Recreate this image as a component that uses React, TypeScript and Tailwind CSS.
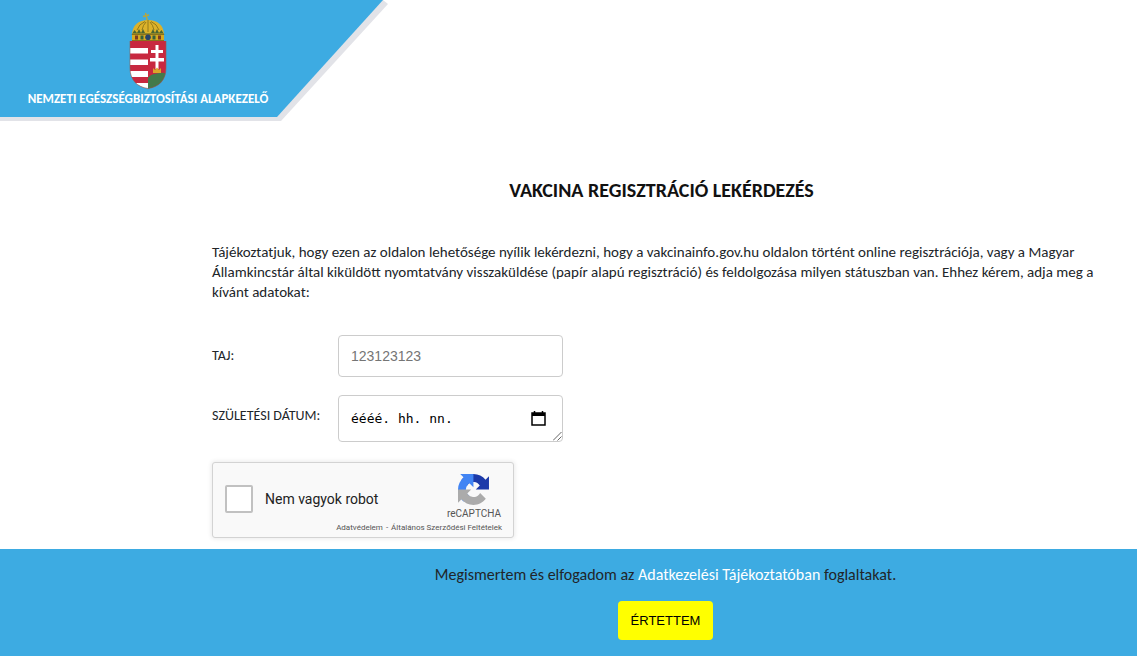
import { useState } from "react";
import type { FormEvent } from "react";

function CoatOfArms() {
  return (
    <svg viewBox="0 0 38 77" className="h-[77px] w-[38px]" role="img" aria-label="Magyarország címere">
      <defs>
        <clipPath id="shield">
          <path d="M1 29H37V56C37 68 30 75 19 76.500C8 75 1 68 1 56Z" />
        </clipPath>
      </defs>

      {/* crown */}
      <path d="M16.500 1L18.500 9M14 4.500L20 3" stroke="#b9a63a" strokeWidth="1.400" />
      <path d="M3 23C3 13 10 8 19 8C28 8 35 13 35 23Z" fill="#dcb22a" />
      <path d="M8 18Q10 12 16 9.500M30 18Q28 12 22 9.500M19 8V20M13 18Q14 13 17 10M25 18Q24 13 21 10" stroke="#8b7418" strokeWidth="0.900" fill="none" />
      <path d="M2.500 23L5.500 18L8 21L10 17L12 21L14 17L16 21H22L24 17L26 21L28 17L30 21L32.500 18L35.500 23Z" fill="#4a6432" />
      <rect x="3" y="21.500" width="32" height="7.500" rx="1" fill="#d6a91f" />
      <path d="M3 22.500H35M3 28.500H35" stroke="#8a711c" strokeWidth="1" />
      <circle cx="19" cy="25.300" r="2.800" fill="#27436b" />
      <rect x="6" y="23.500" width="3" height="4" fill="#7c3b22" />
      <rect x="11.500" y="23.500" width="3" height="4" fill="#35603d" />
      <rect x="23.500" y="23.500" width="3" height="4" fill="#35603d" />
      <rect x="29" y="23.500" width="3" height="4" fill="#7c3b22" />

      {/* shield */}
      <g clipPath="url(#shield)">
        <rect x="1" y="29" width="36" height="48" fill="#c8283f" />
        <path d="M1 36H19V41.500H1ZM1 47.500H19V53H1ZM1 59H19V65H1ZM1 71H19V77H1Z" fill="#fff" />
        <path d="M19 66Q21 62 28 61.500Q35 60 37 62V77H19Z" fill="#437a4b" />
        <path d="M26.500 33H29.500V38H34V41H29.500V46H35V49.500H29.500V57H26.500V49.500H21V46H26.500V41H22V38H26.500Z" fill="#fff" />
        <path d="M24 56L26 58L28 55.500L30 58L32 56V61H24Z" fill="#dba52a" />
      </g>
      <path d="M1 29V56C1 68 8 75 19 76.500C30 75 37 68 37 56V29" stroke="#8d5f54" strokeWidth="0.600" fill="none" />
    </svg>
  );
}

function RecaptchaLogo() {
  return (
    <svg viewBox="0 0 64 64" className="size-[31px]" aria-hidden="true">
      <path fill="#1c3aa9" d="M64 31.955l-.033-1.37V4.687l-7.16 7.16C50.948 4.674 42.033.093 32.05.093c-10.4 0-19.622 4.96-25.458 12.64l11.736 11.86a15.55 15.55 0 0 1 4.754-5.334c2.05-1.6 4.952-2.906 8.968-2.906.485 0 .86.057 1.135.163 4.976.393 9.288 3.14 11.828 7.124l-8.307 8.307L64 31.953" />
      <path fill="#4285f4" d="M31.862.094l-1.37.033H4.594l7.16 7.16C4.58 13.147 0 22.06 0 32.046c0 10.4 4.96 19.622 12.64 25.458L24.5 45.768a15.55 15.55 0 0 1-5.334-4.754c-1.6-2.05-2.906-4.952-2.906-8.968 0-.485.057-.86.163-1.135.393-4.976 3.14-9.288 7.124-11.828l8.307 8.307L31.86.095" />
      <path fill="#ababab" d="M.001 32.045l.033 1.37v25.898l7.16-7.16c5.86 7.173 14.774 11.754 24.76 11.754 10.4 0 19.622-4.96 25.458-12.64l-11.736-11.86a15.55 15.55 0 0 1-4.754 5.334c-2.05 1.6-4.952 2.906-8.968 2.906-.485 0-.86-.057-1.135-.163-4.976-.393-9.288-3.14-11.828-7.124l8.307-8.307c-10.522.04-22.4.066-27.295-.005" />
    </svg>
  );
}

function Header() {
  return (
    <header className="h-[121px] w-[388px] bg-[#e2e3e8] [clip-path:polygon(0_0,383px_0,388px_4px,281px_100%,0_100%)]">
      <div className="h-[117px] bg-[#3dabe2] [clip-path:polygon(0_0,383px_0,277px_100%,0_100%)]">
        <div className="flex w-[296px] flex-col items-center pt-3">
          <CoatOfArms />
          <p className="text-[13px] leading-5 font-bold text-white">NEMZETI EGÉSZSÉGBIZTOSÍTÁSI ALAPKEZELŐ</p>
        </div>
      </div>
    </header>
  );
}

function Recaptcha() {
  const [checked, setChecked] = useState(false);

  return (
    <div className="mt-5 flex h-[76px] w-[302px] flex-col rounded-[3px] border border-[#d3d3d3] bg-[#f9f9f9] font-['Roboto',sans-serif] shadow-[0_0_4px_1px_rgba(0,0,0,0.08)]">
      <div className="flex justify-between pr-3 pl-3">
        <div className="flex items-center gap-3 pt-3">
          <input id="robot" type="checkbox" checked={checked} onChange={(e) => setChecked(e.target.checked)}
            className="size-7 appearance-none rounded-[2px] border-2 border-[#c1c1c1] bg-white checked:bg-[#4285f4]" />
          <label htmlFor="robot" className="text-sm text-[#222]">Nem vagyok robot</label>
        </div>
        <div className="flex flex-col items-center pt-[11px]">
          <RecaptchaLogo />
          <span className="text-[10px] leading-[18px] text-[#555]">reCAPTCHA</span>
        </div>
      </div>
      <div className="flex justify-end gap-[3px] pr-[11px] text-[8px] leading-[10px] text-[#555]">
        <a href="#adatvedelem">Adatvédelem</a>
        <span>-</span>
        <a href="#feltetelek">Általános Szerződési Feltételek</a>
      </div>
    </div>
  );
}

export default function App() {
  const [taj, setTaj] = useState("");
  const [birthDate, setBirthDate] = useState("");
  const [accepted, setAccepted] = useState(false);

  const handleSubmit = (e: FormEvent) => e.preventDefault();

  return (
    <div className="flex min-h-screen flex-col bg-white font-['Carlito','Lato',sans-serif] text-[#212529]">
      <Header />

      <main className="pr-[26px] pb-[11px] pl-[212px]">
        <h1 className="pt-[57px] text-center text-xl leading-6 font-bold text-[#111]">VAKCINA REGISZTRÁCIÓ LEKÉRDEZÉS</h1>
        <p className="mt-10 text-[15px] leading-5">
          Tájékoztatjuk, hogy ezen az oldalon lehetősége nyílik lekérdezni, hogy a vakcinainfo.gov.hu oldalon történt online regisztrációja, vagy a Magyar Államkincstár által kiküldött nyomtatvány visszaküldése (papír alapú regisztráció) és feldolgozása milyen státuszban van. Ehhez kérem, adja meg a kívánt adatokat:
        </p>

        <form onSubmit={handleSubmit} className="mt-[33px]">
          <div className="flex">
            <label htmlFor="taj" className="w-[126px] pt-[11px] text-sm leading-5">TAJ:</label>
            <input id="taj" type="text" value={taj} onChange={(e) => setTaj(e.target.value)} placeholder="123123123"
              className="h-[42px] w-[225px] rounded border border-[#ccc] px-3 font-['Liberation_Sans',sans-serif] text-sm placeholder:text-[#757575]" />
          </div>

          <div className="mt-[18px] flex">
            <label htmlFor="birth-date" className="w-[126px] pt-[11px] text-sm leading-5">SZÜLETÉSI DÁTUM:</label>
            <div className="relative flex h-[47px] w-[225px] items-center rounded border border-[#ccc] px-3">
              <input id="birth-date" type="text" value={birthDate} onChange={(e) => setBirthDate(e.target.value)} placeholder="éééé. hh. nn."
                className="min-w-0 flex-1 font-['DejaVu_Sans_Mono',monospace] text-[13px] text-black outline-none placeholder:text-black" />
              <button type="button" aria-label="Naptár megnyitása" className="px-1">
                <svg viewBox="0 0 15 15" className="size-[15px]">
                  <path d="M1 2H14V14H1ZM1 4H14M3.500 0V2M11.500 0V2" fill="none" stroke="#000" strokeWidth="1.500" />
                  <path d="M1 2H14V5H1Z" fill="#000" />
                </svg>
              </button>
              {/* resize grip */}
              <svg viewBox="0 0 9 9" className="absolute right-0 bottom-0 size-[9px]" aria-hidden="true">
                <path d="M0 8.500L8.500 0M4.500 8.500L8.500 4.500" stroke="#555" strokeWidth="0.900" />
              </svg>
            </div>
          </div>

          <Recaptcha />
        </form>
      </main>

      {!accepted && (
        <footer className="mt-auto flex flex-col items-center bg-[#3dabe2] pt-4 pb-4 pl-[194px]">
          <p className="text-base leading-5 text-[#212529]">
            Megismertem és elfogadom az <a href="#tajekoztato" className="text-white">Adatkezelési Tájékoztatóban</a> foglaltakat.
          </p>
          <button type="button" onClick={() => setAccepted(true)}
            className="mt-4 rounded bg-[#ff0] px-[13px] py-[9px] font-['Liberation_Sans',sans-serif] text-[13px] leading-[21px] text-black">
            ÉRTETTEM
          </button>
        </footer>
      )}
    </div>
  );
}
